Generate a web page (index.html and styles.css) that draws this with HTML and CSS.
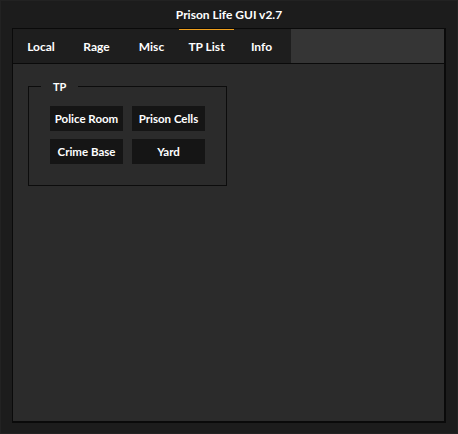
FILE: index.html
```html
<!DOCTYPE html>
<html>
<head>
<meta charset="utf-8">
<link rel="stylesheet" href="styles.css">
</head>
<body>
<div class="window">
  <div class="title">Prison Life GUI v2.7</div>
  <div class="frame">
    <div class="tabs">
      <div class="tab">Local</div>
      <div class="tab">Rage</div>
      <div class="tab">Misc</div>
      <div class="tab active">TP List</div>
      <div class="tab">Info</div>
      <div class="tab-fill"></div>
    </div>
    <div class="content">
      <div class="group">
        <div class="group-label">TP</div>
        <div class="grid">
          <div class="btn">Police Room</div>
          <div class="btn">Prison Cells</div>
          <div class="btn">Crime Base</div>
          <div class="btn">Yard</div>
        </div>
      </div>
    </div>
  </div>
</div>
</body>
</html>
```
FILE: styles.css
```css
* { box-sizing: border-box; }
html, body { margin: 0; padding: 0; background: #1c1c1c; }
body { font-family: Lato, "Liberation Sans", sans-serif; color: #ffffff; }
.window {
  width: 458px;
  height: 434px;
  background: #1c1c1c;
  border: 1px solid #222222;
  display: flex;
  flex-direction: column;
}
.title {
  height: 26px;
  display: flex;
  align-items: center;
  justify-content: center;
  font-weight: 700;
  font-size: 12px;
}
.frame {
  margin: 1px 11px 0 11px;
  height: 395px;
  border: 1px solid #0a0a0a;
  border-width: 1px 2px 2px 1px;
  display: flex;
  flex-direction: column;
}
.tabs {
  height: 35px;
  display: flex;
  background: #1e1e1e;
  border-bottom: 1px solid #0a0a0a;
}
.tab {
  width: 55px;
  display: flex;
  align-items: center;
  justify-content: center;
  font-weight: 700;
  font-size: 12px;
  position: relative;
}
.tab:first-child { width: 56px; }
.tab.active::before {
  content: "";
  position: absolute;
  left: 0; right: 0; top: 0;
  height: 1px;
  background: #f0a01e;
}
.tab-fill { flex: 1; background: #353535; margin-left: 2px; }
.content {
  flex: 1;
  background: #2b2b2b;
  padding: 22px 0 0 15px;
}
.group {
  position: relative;
  width: 199px;
  height: 100px;
  border: 1px solid #0c0c0c;
  padding: 19px 0 0 21px;
}
.group-label {
  position: absolute;
  top: -8px;
  left: 12px;
  padding: 0 12px;
  background: #2b2b2b;
  font-weight: 700;
  font-size: 11px;
  line-height: 15px;
}
.grid {
  display: grid;
  grid-template-columns: 73px 73px;
  grid-auto-rows: 25px;
  column-gap: 9px;
  row-gap: 8px;
}
.btn {
  background: #151515;
  display: flex;
  align-items: center;
  justify-content: center;
  font-weight: 700;
  font-size: 11.5px;
}
```
